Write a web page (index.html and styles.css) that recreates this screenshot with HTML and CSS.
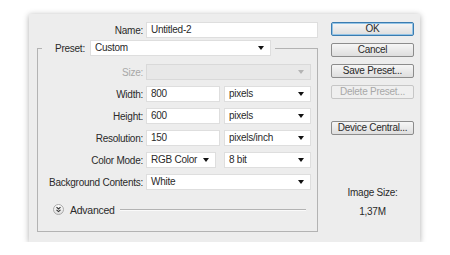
FILE: index.html
```html
<!DOCTYPE html>
<html>
<head>
<meta charset="utf-8">
<link rel="stylesheet" href="styles.css">
</head>
<body>
<div class="dialog">
  <div class="left">
    <div class="name-row">
      <span class="lbl">Name:</span>
      <div class="field">Untitled-2</div>
    </div>
    <div class="group">
      <div class="group-head">
        <span class="lbl">Preset:</span>
        <div class="field select preset">Custom<i class="arrow"></i></div>
      </div>
      <div class="rows">
        <div class="row">
          <span class="lbl dim">Size:</span>
          <div class="field select disabled w165"><i class="arrow grey"></i></div>
        </div>
        <div class="row">
          <span class="lbl">Width:</span>
          <div class="field w74">800</div>
          <div class="field select w87 ml4">pixels<i class="arrow"></i></div>
        </div>
        <div class="row">
          <span class="lbl">Height:</span>
          <div class="field w74">600</div>
          <div class="field select w87 ml4">pixels<i class="arrow"></i></div>
        </div>
        <div class="row">
          <span class="lbl">Resolution:</span>
          <div class="field w74">150</div>
          <div class="field select w87 ml4">pixels/inch<i class="arrow"></i></div>
        </div>
        <div class="row">
          <span class="lbl">Color Mode:</span>
          <div class="field select w70">RGB Color<i class="arrow"></i></div>
          <div class="field select w87 ml8">8 bit<i class="arrow"></i></div>
        </div>
        <div class="row">
          <span class="lbl">Background Contents:</span>
          <div class="field select w165">White<i class="arrow"></i></div>
        </div>
      </div>
      <div class="advanced">
        <svg class="adv-icon" width="11" height="11" viewBox="0 0 11 11">
          <defs>
            <linearGradient id="g" x1="0" y1="0" x2="0" y2="1">
              <stop offset="0" stop-color="#ffffff"/>
              <stop offset="1" stop-color="#dcdcdc"/>
            </linearGradient>
          </defs>
          <circle cx="5.5" cy="5.5" r="5" fill="url(#g)" stroke="#a9a9a9" stroke-width="1"/>
          <path d="M3.5 3.2 L5.5 5 L7.5 3.2 M3.5 5.8 L5.5 7.6 L7.5 5.8" fill="none" stroke="#333" stroke-width="1.1"/>
        </svg>
        <span class="adv-text">Advanced</span>
        <span class="adv-line"></span>
      </div>
    </div>
  </div>
  <div class="right">
    <div class="btn ok">OK</div>
    <div class="btn">Cancel</div>
    <div class="btn">Save Preset...</div>
    <div class="btn disabled">Delete Preset...</div>
    <div class="btn device">Device Central...</div>
    <div class="info">Image Size:</div>
    <div class="info size">1,37M</div>
  </div>
</div>
</body>
</html>
```

FILE: styles.css
```css
html, body {
  margin: 0;
  padding: 0;
  background: #ffffff;
}
body {
  font-family: "Liberation Sans", Arial, sans-serif;
  font-size: 10px;
  letter-spacing: -0.25px;
  color: #2a2a2a;
}
.dialog {
  margin: 14px 0 0 29px;
  width: 391px;
  height: 228px;
  box-sizing: border-box;
  padding: 8px 0 0 8px;
  background: #ededed;
  box-shadow: 0 1px 6px rgba(0, 0, 0, 0.32);
  display: flex;
}
.left {
  width: 281px;
}
.name-row {
  display: flex;
  align-items: center;
}
.name-row .lbl {
  width: 106px;
  margin-right: 3px;
}
.name-row .field {
  width: 172px;
}
.lbl {
  text-align: right;
  white-space: nowrap;
}
.dim {
  color: #a8a8a8;
}
.field {
  height: 16px;
  box-sizing: border-box;
  background: #ffffff;
  border: 1px solid #dedede;
  padding: 0 4px;
  line-height: 14px;
  display: flex;
  align-items: center;
  justify-content: space-between;
  white-space: nowrap;
}
.select {
  padding-right: 6px;
}
.disabled.field {
  background: #e8e8e8;
  border-color: #d9d9d9;
  justify-content: flex-end;
}
.arrow {
  width: 0;
  height: 0;
  border-left: 3.5px solid transparent;
  border-right: 3.5px solid transparent;
  border-top: 4px solid #111;
}
.arrow.grey {
  border-top-color: #b4b4b4;
}
.group {
  margin-top: 10px;
  width: 281px;
  height: 184px;
  box-sizing: border-box;
  border: 1px solid #b3b3b3;
}
.group-head {
  margin: -9px 0 0 4px;
  padding: 0 4px 0 13px;
  background: #ededed;
  display: flex;
  align-items: center;
  width: fit-content;
}
.group-head .lbl {
  margin-right: 5px;
}
.preset {
  width: 181px;
}
.rows {
  margin-top: 8px;
  display: flex;
  flex-direction: column;
  gap: 6px;
}
.row {
  display: flex;
  align-items: center;
}
.row .lbl {
  width: 105px;
  margin-right: 3px;
}
.w165 { width: 165px; }
.w74 { width: 74px; }
.w87 { width: 87px; }
.w70 { width: 70px; }
.ml4 { margin-left: 4px; }
.ml8 { margin-left: 8px; }
.advanced {
  margin-top: 14px;
  padding-left: 15px;
  margin-right: 11px;
  display: flex;
  align-items: center;
  height: 11px;
}
.adv-icon {
  display: block;
  flex: none;
}
.adv-text {
  margin-left: 6px;
  font-size: 10.5px;
}
.adv-line {
  flex: 1;
  margin-left: 5px;
  height: 0;
  border-top: 1px solid #b3b3b3;
  border-bottom: 1px solid #fafafa;
}
.right {
  margin-left: 13px;
  width: 83px;
  display: flex;
  flex-direction: column;
}
.btn {
  height: 14px;
  box-sizing: border-box;
  border: 1px solid #8c8c8c;
  border-radius: 2px;
  background: linear-gradient(#f6f6f6, #dedede);
  text-align: center;
  line-height: 12px;
  margin-bottom: 7px;
  white-space: nowrap;
}
.btn.ok {
  border-color: #3a7cb0;
  box-shadow: inset 0 0 0 1px #94c4e6;
}
.btn.disabled {
  color: #a8a8a8;
  border-color: #c6c6c6;
  background: #efefef;
}
.btn.device {
  margin-top: 15px;
}
.info {
  text-align: center;
  line-height: 12px;
  margin-top: 45px;
}
.info.size {
  margin-top: 7px;
}
```
